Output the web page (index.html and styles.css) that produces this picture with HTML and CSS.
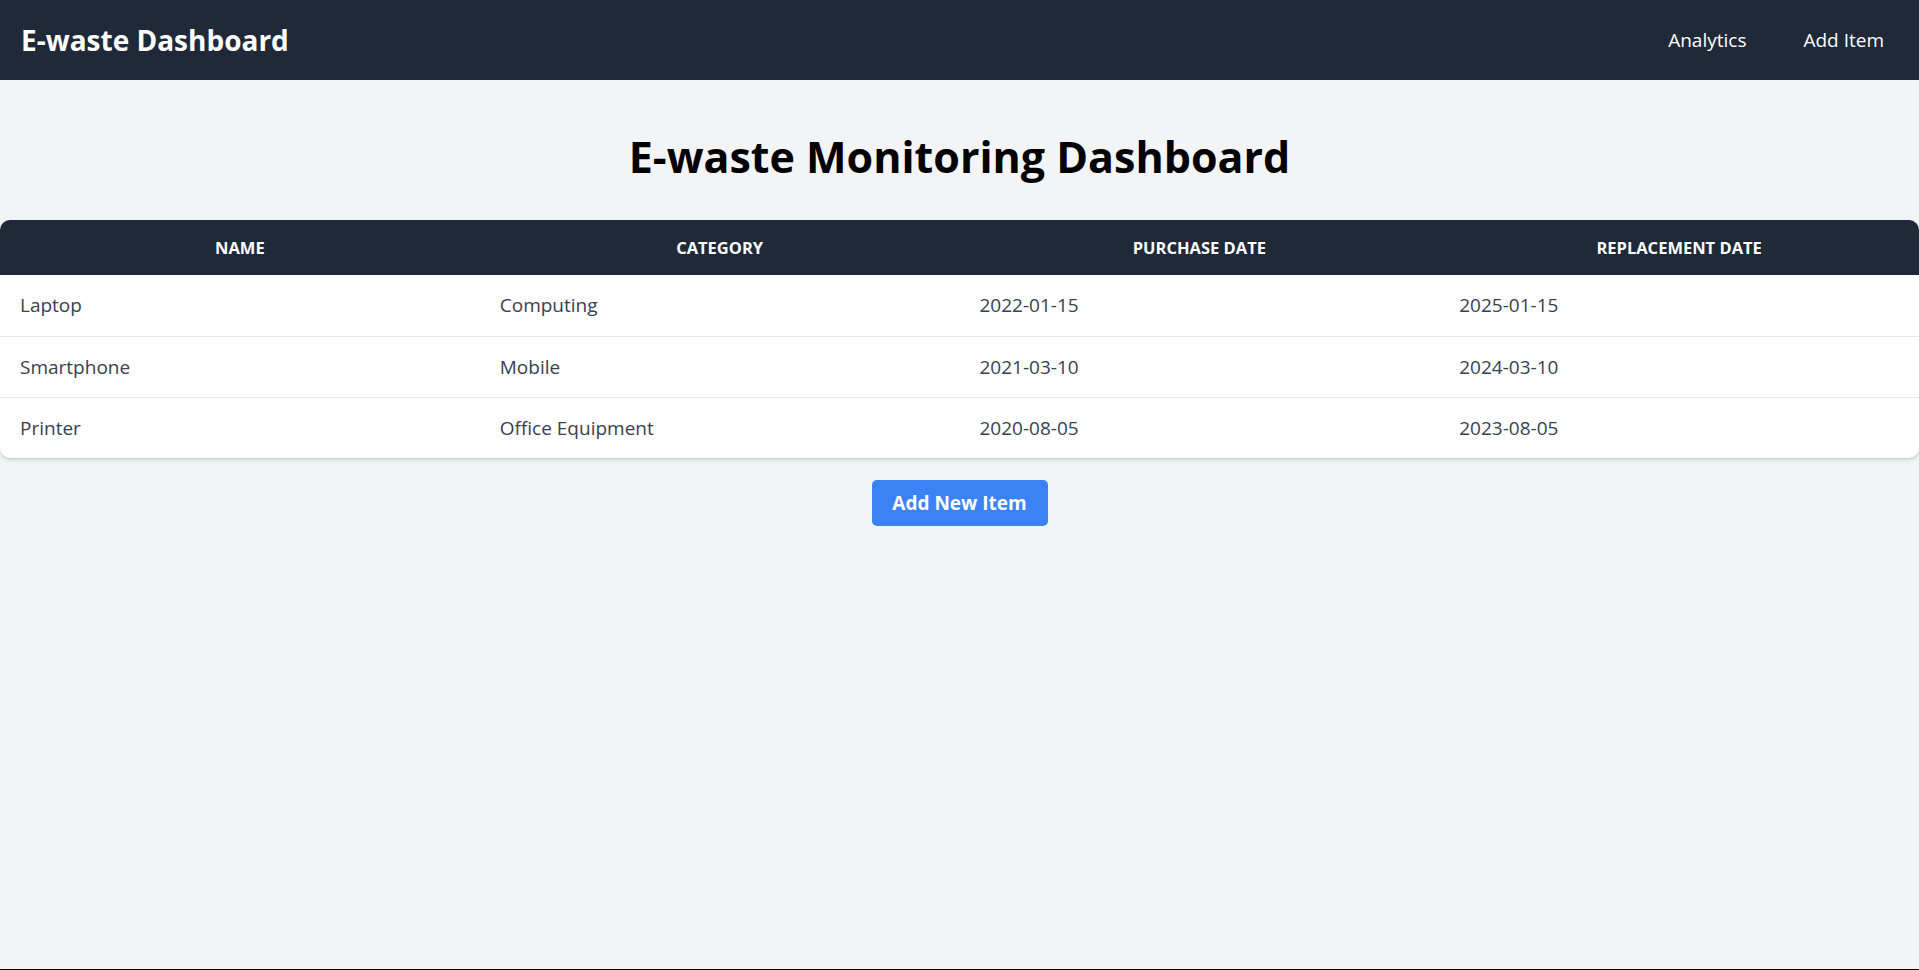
FILE: index.html
```html
<!DOCTYPE html>
<html lang="en">
<head>
<meta charset="utf-8">
<title>E-waste Dashboard</title>
<link rel="stylesheet" href="styles.css">
</head>
<body>
<nav class="navbar">
  <div class="brand">E-waste Dashboard</div>
  <div class="nav-links">
    <a class="nav-link" href="#">Analytics</a>
    <a class="nav-link" href="#">Add Item</a>
  </div>
</nav>
<main class="main">
  <h1 class="page-title">E-waste Monitoring Dashboard</h1>
  <div class="table-card">
    <table class="items">
      <thead>
        <tr>
          <th>Name</th>
          <th>Category</th>
          <th>Purchase Date</th>
          <th>Replacement Date</th>
        </tr>
      </thead>
      <tbody>
        <tr><td>Laptop</td><td>Computing</td><td>2022-01-15</td><td>2025-01-15</td></tr>
        <tr><td>Smartphone</td><td>Mobile</td><td>2021-03-10</td><td>2024-03-10</td></tr>
        <tr><td>Printer</td><td>Office Equipment</td><td>2020-08-05</td><td>2023-08-05</td></tr>
      </tbody>
    </table>
  </div>
  <div class="actions">
    <button class="btn-primary" type="button">Add New Item</button>
  </div>
</main>
</body>
</html>
```
FILE: styles.css
```css
* { box-sizing: border-box; }
html, body { margin: 0; padding: 0; }
body {
  background: #f3f4f6;
  font-family: "Segoe UI", "Open Sans", "Noto Sans", sans-serif;
  min-height: 970px;
  border-bottom: 1px solid #000;
  color: #111;
}
.navbar {
  height: 80px;
  background: #1f2937;
  display: flex;
  align-items: center;
  justify-content: space-between;
  padding: 0 20px 0 21px;
}
.brand {
  color: #fff;
  font-weight: 700;
  font-size: 28px;
}
.nav-links {
  display: flex;
  gap: 27px;
}
.nav-link {
  color: #fff;
  text-decoration: none;
  font-size: 19px;
  padding: 0 15px;
}
.main {
  padding-top: 52px;
}
.page-title {
  margin: 0 0 38px;
  text-align: center;
  font-size: 43px;
  line-height: 50px;
  font-weight: 700;
  color: #000;
}
.table-card {
  background: #fff;
  border-radius: 10px;
  overflow: hidden;
  box-shadow: 0 2px 4px rgba(0,0,0,0.12), 0 1px 2px rgba(0,0,0,0.08);
}
.items {
  width: 100%;
  border-collapse: collapse;
  table-layout: fixed;
}
.items th {
  background: #1f2937;
  color: #fff;
  height: 55px;
  font-size: 16.5px;
  font-weight: 700;
  text-transform: uppercase;
  text-align: center;
  padding: 0 20px;
}
.items td {
  height: 61px;
  padding: 0 20px;
  font-size: 19px;
  color: #374151;
  border-bottom: 1px solid #e5e7eb;
}
.items tbody tr:last-child td { border-bottom: none; }
.actions {
  display: flex;
  justify-content: center;
  margin-top: 22px;
}
.btn-primary {
  background: #3b82f6;
  color: #fff;
  border: none;
  border-radius: 5px;
  width: 176px;
  height: 46px;
  font-family: inherit;
  font-size: 19px;
  font-weight: 700;
}
```
